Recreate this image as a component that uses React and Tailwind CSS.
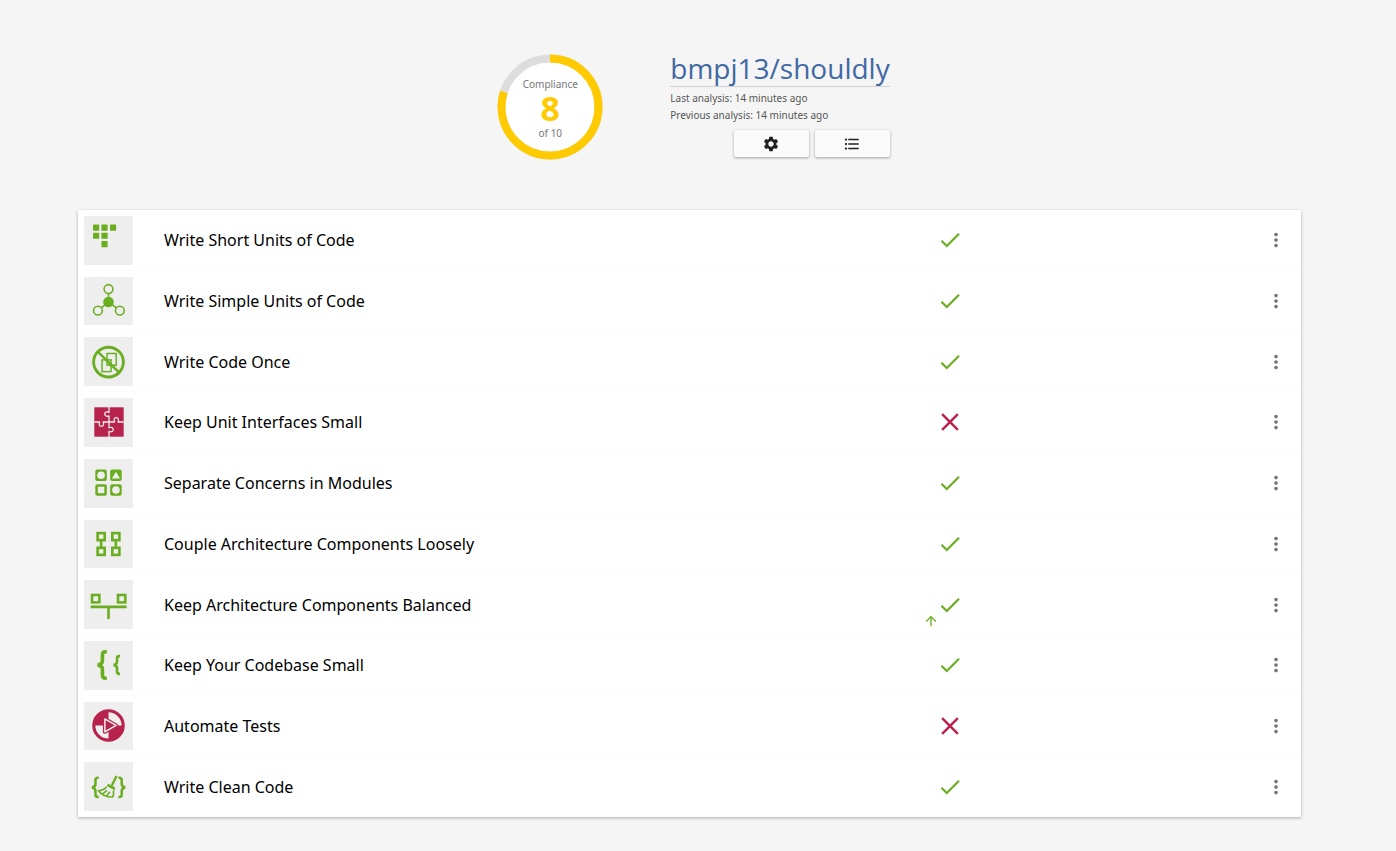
import React from "react";
import { MdSettings, MdFormatListBulleted, MdCheck, MdClose, MdMoreVert, MdArrowUpward } from "react-icons/md";

const GREEN = "#6aae20";
const RED = "#b7234c";
const PLATE = "#eeeeee";

function ShortUnits() {
  return (
    <g fill={GREEN}>
      <rect x="8.7" y="8.7" width="6.3" height="6.3" rx="0.6" />
      <rect x="17.3" y="8.7" width="6.3" height="6.3" rx="0.6" />
      <rect x="26" y="8.7" width="6.3" height="6.3" rx="0.6" />
      <rect x="8.7" y="17" width="6.3" height="6.3" rx="0.6" />
      <rect x="17.3" y="17" width="6.3" height="6.3" rx="0.6" />
      <rect x="17.3" y="25.6" width="6.3" height="6.3" rx="0.6" />
    </g>
  );
}

function SimpleUnits() {
  return (
    <g fill="none" stroke={GREEN} strokeWidth="1.6">
      <path d="M24.5 17v8.5M24.5 25.5l-7.3 6M24.5 25.5l8 6" />
      <circle cx="24.5" cy="12.3" r="4.5" />
      <circle cx="13.7" cy="34.3" r="4.5" />
      <circle cx="36.1" cy="34.3" r="4.5" />
      <circle cx="24.5" cy="25.6" r="4.6" fill={GREEN} />
    </g>
  );
}

function CodeOnce() {
  return (
    <g fill="none" stroke={GREEN}>
      <g strokeWidth="1.5">
        <rect x="17.9" y="22.3" width="9.2" height="12" />
        <rect x="23" y="15.8" width="9.4" height="12" />
      </g>
      <circle cx="24.5" cy="24.6" r="15.2" strokeWidth="2.9" />
      <path d="M13.5 14l22 21.3" strokeWidth="2.5" />
    </g>
  );
}

function UnitInterfaces() {
  return (
    <g>
      <rect x="10" y="9.5" width="30" height="30" fill={RED} />
      <g fill="none" stroke={PLATE} strokeWidth="1.3" strokeLinejoin="round">
        <path d="M25 9v5.7c-1-.8-4.4-.9-4.4 1.7s3.4 2.6 4.4 1.8v6.3" />
        <path d="M25 24.5h5.7c-.8-1-.9-4.4 1.7-4.4s2.6 3.4 1.8 4.4H40" />
        <path d="M10 24.5h5.5c-.8 1-.9 4.4 1.7 4.4s2.6-3.4 1.8-4.4h6" />
        <path d="M25 24.5v6c1-.8 4.4-.9 4.4 1.7s-3.4 2.6-4.4 1.8V40" />
      </g>
    </g>
  );
}

function Concerns() {
  return (
    <g>
      <g fill={GREEN}>
        <rect x="11" y="10.8" width="11.8" height="11.6" rx="2" />
        <rect x="26.2" y="10.8" width="11.8" height="11.6" rx="2" />
        <rect x="11" y="25.8" width="11.8" height="11.6" rx="2" />
        <rect x="26.2" y="25.8" width="11.8" height="11.6" rx="2" />
      </g>
      <g fill={PLATE}>
        <circle cx="16.9" cy="16.6" r="3.9" />
        <path d="M32.1 13l4.1 7h-8.2z" />
        <rect x="13.6" y="28.3" width="6.6" height="6.6" />
        <circle cx="32.1" cy="31.6" r="3.9" />
      </g>
    </g>
  );
}

function Coupling() {
  return (
    <g fill="none" stroke={GREEN} strokeWidth="2.7">
      <rect x="13.4" y="13.4" width="7.2" height="7.2" />
      <rect x="28.4" y="13.4" width="7.2" height="7.2" />
      <rect x="13.4" y="28.4" width="7.2" height="7.2" />
      <rect x="28.4" y="28.4" width="7.2" height="7.2" />
      <path d="M17 21v7M32 21v7" />
    </g>
  );
}

function Balance() {
  return (
    <g fill="none" stroke={GREEN} strokeWidth="2.6">
      <rect x="7.7" y="14.3" width="7.5" height="7.5" />
      <rect x="34.2" y="14.3" width="7.5" height="7.5" />
      <path d="M6.3 26.4h36.7M24.5 26.4v12.3" />
    </g>
  );
}

function SmallCodebase() {
  return (
    <g fill="none" stroke={GREEN}>
      <path d="M22.8 11h-1.5q-3 0-3 3.2v6q0 3.4-4.8 4.3q4.8.9 4.8 4.3v6q0 3.2 3 3.2h1.5" strokeWidth="3.7" />
      <path d="M36.2 15.4h-.7q-2.3 0-2.3 2.2v3.7q0 2.5-3.4 3.2q3.4.7 3.4 3.2v3.7q0 2.2 2.3 2.2h.7" strokeWidth="2.7" />
    </g>
  );
}

function Tests() {
  return (
    <g>
      <circle cx="24.5" cy="23.9" r="16.6" fill={RED} />
      <path d="M24.5 10.5A13.4 13.4 0 0 1 37.9 23.9H24.5zM24.5 37.3A13.4 13.4 0 0 1 11.1 23.9H24.5z" fill={PLATE} />
      <g fill={RED} strokeLinejoin="round">
        <path d="M20.8 17.3v13.2l11.4-6.600z" stroke={RED} strokeWidth="4" />
        <path d="M20.8 17.3v13.2l11.4-6.600z" stroke={PLATE} strokeWidth="1.5" />
      </g>
    </g>
  );
}

function CleanCode() {
  return (
    <g fill="none" stroke={GREEN} strokeWidth="2.6">
      <path d="M14.5 15h-.7q-2.6 0-2.6 2.3v4.2q0 2.7-3.5 3.4q3.5.7 3.5 3.4v4.2q0 2.3 2.6 2.3h.7" />
      <path d="M34.7 15h.7q2.6 0 2.6 2.3v4.2q0 2.7 3.5 3.4q-3.5.7-3.5 3.4v4.2q0 2.3-2.6 2.3h-.7" />
      <path d="M32.7 13.2l-4.8 9.8" strokeWidth="2.4" />
      <path d="M24.3 21.2l7 3.9-.7 2.7-8-4.2z" fill={GREEN} stroke="none" />
      <path d="M22.5 24.3c-2 2.7-4.5 3.7-8 4.2 3 4 8 6.4 14.3 6.2 1-2.2 1.2-4.3.8-6.8M18.5 31.5l4.5-3.5M22.8 33.5l3.2-4.2" strokeWidth="1.7" />
    </g>
  );
}

const guidelines = [
  { name: "Write Short Units of Code", Icon: ShortUnits, ok: true },
  { name: "Write Simple Units of Code", Icon: SimpleUnits, ok: true },
  { name: "Write Code Once", Icon: CodeOnce, ok: true },
  { name: "Keep Unit Interfaces Small", Icon: UnitInterfaces, ok: false },
  { name: "Separate Concerns in Modules", Icon: Concerns, ok: true },
  { name: "Couple Architecture Components Loosely", Icon: Coupling, ok: true },
  { name: "Keep Architecture Components Balanced", Icon: Balance, ok: true, improved: true },
  { name: "Keep Your Codebase Small", Icon: SmallCodebase, ok: true },
  { name: "Automate Tests", Icon: Tests, ok: false },
  { name: "Write Clean Code", Icon: CleanCode, ok: true },
];

function ComplianceRing() {
  return (
    <div className="relative size-[106px]">
      <svg viewBox="0 0 106 106" className="size-full" aria-hidden="true">
        <circle cx="53" cy="53" r="48.5" fill="#fff" stroke="#dddddd" strokeWidth="8" />
        <circle
          cx="53"
          cy="53"
          r="48.5"
          fill="none"
          stroke="#ffcb00"
          strokeWidth="8"
          pathLength="10"
          strokeDasharray="8 2"
          transform="rotate(-90 53 53)"
        />
      </svg>
      <div className="absolute inset-0 flex flex-col items-center justify-center pt-0.5 text-[10px] text-[#777777]">
        <span className="leading-4">Compliance</span>
        <span className="text-[34px] leading-[33px] font-bold text-[#ffcb00]">8</span>
        <span className="leading-4">of 10</span>
      </div>
    </div>
  );
}

function HeaderButton({ label, children }) {
  return (
    <button
      type="button"
      aria-label={label}
      className="flex h-[27px] w-[75px] items-center justify-center rounded-xs bg-[#fafafa] text-[#212121] shadow-[0_1px_3px_rgba(0,0,0,0.35)]"
    >
      {children}
    </button>
  );
}

function GuidelineRow({ name, Icon, ok, improved }) {
  return (
    <li className="flex items-stretch p-1.5 shadow-[inset_0_-1px_#fcfcfc]">
      <div className="flex w-[49px] items-center bg-[#eeeeee]">
        <svg viewBox="0 0 49 49" className="h-12 w-full" aria-hidden="true">
          <Icon />
        </svg>
      </div>
      <h2 className="flex flex-1 items-center pl-[31px] text-base text-black">{name}</h2>
      <div className="relative flex w-[30px] items-center justify-center">
        {ok ? (
          <MdCheck size={26} color={GREEN} role="img" aria-label="Compliant" />
        ) : (
          <MdClose size={30} color={RED} role="img" aria-label="Not compliant" />
        )}
        {improved && (
          <MdArrowUpward size={16} color={GREEN} className="absolute right-[26px] bottom-0" role="img" aria-label="Improved" />
        )}
      </div>
      <div className="flex w-[330px] items-center justify-end pr-2">
        <button type="button" aria-label={`Options for ${name}`} className="text-[#757575]">
          <MdMoreVert size={22} />
        </button>
      </div>
    </li>
  );
}

export default function App() {
  return (
    <div className="min-h-screen bg-[#f5f5f5] pr-[95px] pb-8 pl-[78px] font-['Noto_Sans',sans-serif]">
      <header className="flex items-start justify-center gap-[67px] pt-[54px] pl-2">
        <ComplianceRing />
        <div className="min-w-[218px]">
          <h1 className="border-b border-[#d0d0d0] pb-1 font-['Open_Sans',sans-serif] text-[28px] leading-7">
            <a href="#repository" className="text-[#4169a4]">
              bmpj13/shouldly
            </a>
          </h1>
          <p className="pt-[3px] text-[10px] leading-[17px] text-[#555555]">Last analysis: 14 minutes ago</p>
          <p className="text-[10px] leading-[17px] text-[#555555]">Previous analysis: 14 minutes ago</p>
          <div className="mt-1.5 flex justify-end gap-1.5">
            <HeaderButton label="Settings">
              <MdSettings size={18} />
            </HeaderButton>
            <HeaderButton label="Analysis list">
              <MdFormatListBulleted size={18} />
            </HeaderButton>
          </div>
        </div>
      </header>
      <main className="pt-[50px]">
        <ul className="grid min-h-[607px] auto-rows-fr bg-white shadow-[0_1px_3px_rgba(0,0,0,0.3)]">
          {guidelines.map((g) => (
            <GuidelineRow key={g.name} {...g} />
          ))}
        </ul>
      </main>
    </div>
  );
}
